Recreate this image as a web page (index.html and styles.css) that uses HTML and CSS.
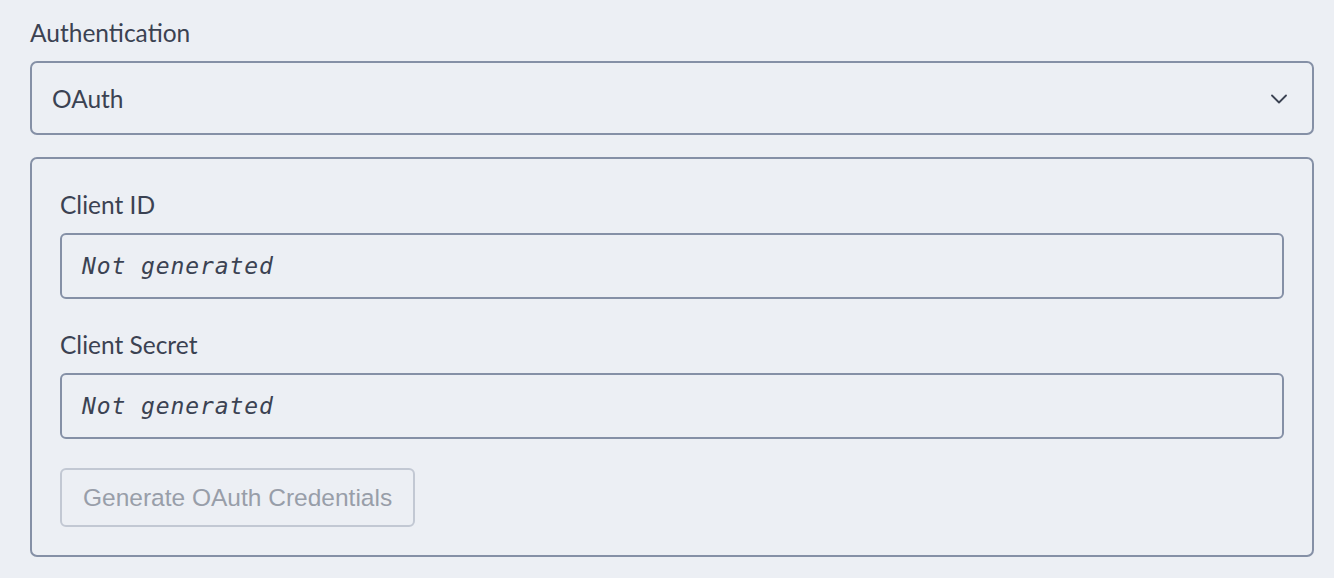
FILE: index.html
```html
<!DOCTYPE html>
<html lang="en">
<head>
<meta charset="utf-8">
<title>Authentication</title>
<link rel="stylesheet" href="styles.css">
</head>
<body>
<div class="page">
  <div class="field">
    <label class="label" for="auth">Authentication</label>
    <div class="select">
      <span class="select-value" id="auth">OAuth</span>
      <svg class="chevron" width="16" height="10" viewBox="0 0 16 10" aria-hidden="true">
        <path d="M1 1.5 L8 8.5 L15 1.5" fill="none" stroke="#3b4252" stroke-width="1.8" stroke-linecap="round" stroke-linejoin="round"/>
      </svg>
    </div>
  </div>
  <div class="panel">
    <div class="field inner">
      <div class="label">Client ID</div>
      <div class="input">Not generated</div>
    </div>
    <div class="field inner">
      <div class="label">Client Secret</div>
      <div class="input">Not generated</div>
    </div>
    <button class="btn" disabled>Generate OAuth Credentials</button>
  </div>
</div>
</body>
</html>
```
FILE: styles.css
```css
html, body {
  margin: 0;
  padding: 0;
  background: #eceff4;
}
body {
  font-family: Lato, "Noto Sans", sans-serif;
  color: #3b4252;
}
.page {
  padding: 18px 20px 20px 30px;
  display: flex;
  flex-direction: column;
  gap: 22px;
}
.field {
  display: flex;
  flex-direction: column;
  gap: 13px;
}
.label {
  display: block;
  font-size: 24.5px;
  line-height: 30px;
}
.select {
  height: 74px;
  box-sizing: border-box;
  border: 2px solid #8590a6;
  border-radius: 7px;
  display: flex;
  align-items: center;
  justify-content: space-between;
  padding: 0 25px 0 20px;
  font-size: 24.5px;
}
.chevron {
  display: block;
  margin-top: 2px;
}
.panel {
  box-sizing: border-box;
  height: 400px;
  border: 2px solid #8590a6;
  border-radius: 7px;
  padding: 31px 28px 28px;
  display: flex;
  flex-direction: column;
}
.inner {
  gap: 13px;
}
.inner + .inner {
  margin-top: 31px;
}
.input {
  height: 66px;
  box-sizing: border-box;
  border: 2px solid #8590a6;
  border-radius: 6px;
  display: flex;
  align-items: center;
  padding: 0 20px;
  font-family: "DejaVu Sans Mono", monospace;
  font-style: italic;
  font-size: 23px;
  letter-spacing: 0.9px;
  color: #3b4252;
}
.btn {
  align-self: flex-start;
  margin-top: 29px;
  height: 59px;
  box-sizing: border-box;
  border: 2px solid #c2c8d3;
  border-radius: 6px;
  background: transparent;
  padding: 0 21px;
  font-family: "Liberation Sans", Arial, sans-serif;
  font-size: 24.5px;
  color: #989ea9;
}
```
